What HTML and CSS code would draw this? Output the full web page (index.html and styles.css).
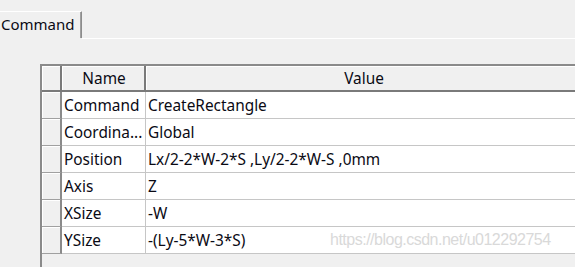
FILE: index.html
```html
<!DOCTYPE html>
<html lang="en">

<head>
    <meta charset="UTF-8">
    <title>Command</title>
    <link rel="stylesheet" href="styles.css">
</head>

<body>
    <div class="tabs">
        <div class="tab">Command</div>
        <div class="tab-rest"></div>
    </div>
    <div class="panel">
        <div class="grid">
            <table class="props">
                <tr class="head">
                    <th class="rh"></th>
                    <th class="name">Name</th>
                    <th class="value">Value</th>
                </tr>
                <tr><td class="rh"></td><td>Command</td><td>CreateRectangle</td></tr>
                <tr><td class="rh"></td><td>Coordina...</td><td>Global</td></tr>
                <tr><td class="rh"></td><td>Position</td><td>Lx/2-2*W-2*S ,Ly/2-2*W-S ,0mm</td></tr>
                <tr><td class="rh"></td><td>Axis</td><td>Z</td></tr>
                <tr><td class="rh"></td><td>XSize</td><td>-W</td></tr>
                <tr><td class="rh"></td><td>YSize</td><td>-(Ly-5*W-3*S)</td></tr>
            </table>
        </div>
        <div class="watermark">https://blog.csdn.net/u012292754</div>
    </div>
</body>

</html>
```

FILE: styles.css
```css
body {
    margin: 0;
    background-color: #f0f0f0;
    font-family: "Noto Sans", "Open Sans", sans-serif;
    font-size: 15.4px;
    color: #0a0a14;
    overflow: hidden;
    height: 267px;
}

.tabs {
    display: flex;
    padding-top: 11px;
    height: 28px;
}

.tab {
    width: 82px;
    height: 27px;
    line-height: 25px;
    padding-left: 1px;
    font-size: 15px;
    border-top: 1px solid #fff;
    border-right: 1px solid #8c8c8c;
    box-shadow: inset -1px 0 #a0a0a0;
    box-sizing: border-box;
}

.tab-rest {
    flex: 1;
    border-bottom: 1px solid #fff;
}

.panel {
    position: relative;
    padding-top: 25px;
    height: 228px;
    box-sizing: border-box;
}

.grid {
    margin-left: 40px;
    height: 203px;
    border-left: 2px solid #8a8a8a;
    border-top: 2px solid #8a8a8a;
    box-sizing: border-box;
    overflow: hidden;
}

.props {
    border-collapse: separate;
    border-spacing: 0;
    width: 540px;
    table-layout: fixed;
}

.props th,
.props td {
    height: 27px;
    padding: 0 0 0 2px;
    text-align: left;
    font-weight: normal;
    white-space: nowrap;
    overflow: hidden;
    box-sizing: border-box;
}

.props td {
    background: #fff;
    border-bottom: 1px solid #c6c6c6;
    border-right: 1px solid #c6c6c6;
}

.props .head th {
    height: 26px;
    text-align: center;
    background: #f0f0f0;
    border-right: 2px solid #7a7a7a;
    border-bottom: 2px solid #7a7a7a;
    box-shadow: inset 1px 1px #fff;
}

.props .rh {
    width: 20px;
    padding: 0;
}

.props .name {
    width: 84px;
}

.props td.rh {
    background: #f0f0f0;
    border-right: 2px solid #8a8a8a;
    border-bottom: 1px solid #a0a0a0;
    box-shadow: inset 1px 1px #fff;
}

.watermark {
    position: absolute;
    left: 330px;
    top: 192px;
    font-family: "Liberation Sans", Arial, sans-serif;
    font-size: 16px;
    color: #d9d9d9;
    letter-spacing: -0.5px;
}
```
